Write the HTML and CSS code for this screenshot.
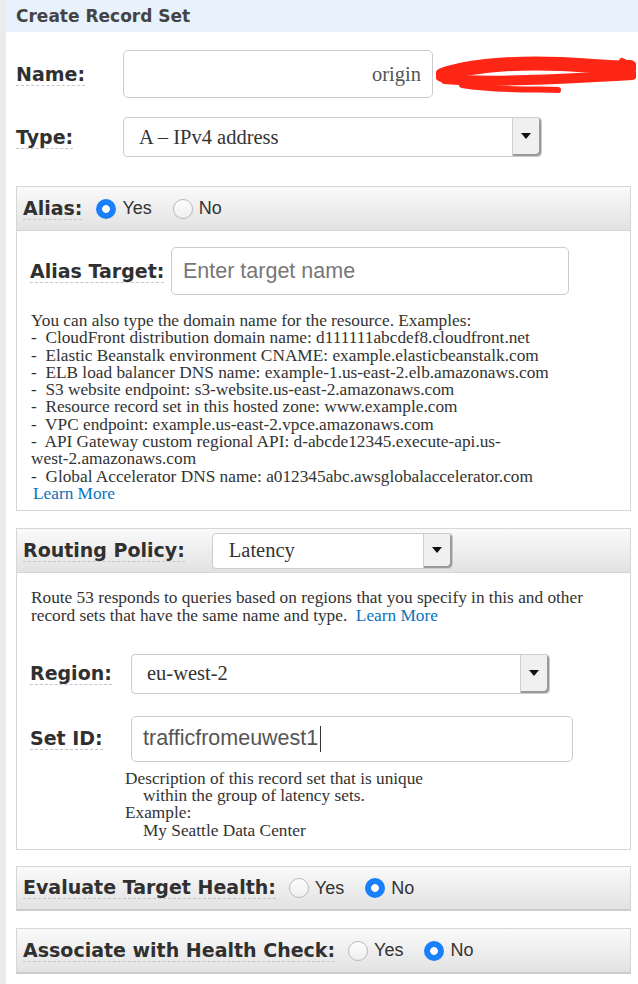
FILE: index.html
```html
<!DOCTYPE html>
<html>
<head>
<meta charset="utf-8">
<title>Create Record Set</title>
<link rel="stylesheet" href="styles.css">
</head>
<body>
<div class="page">
  <div class="title">Create Record Set</div>

  <div class="row row-name">
    <div class="top-lbl"><span class="lbl">Name:</span></div>
    <div class="input name-input">origin</div>
    <svg class="scribble" width="200" height="40" viewBox="0 0 200 40">
      <g fill="none" stroke="#ff2616" stroke-linecap="round" stroke-linejoin="round">
        <path d="M6,21 C34,11 84,8 124,10 C154,11 179,15 194,13" stroke-width="14"/>
        <path d="M9,25 C54,29 124,25 196,21" stroke-width="10"/>
        <path d="M26,31 C64,37 104,35 122,36" stroke-width="6"/>
        <path d="M54,11 L109,7" stroke-width="8"/>
        <path d="M186,7 L192,10" stroke-width="6"/>
      </g>
    </svg>
  </div>

  <div class="row row-type">
    <div class="top-lbl"><span class="lbl">Type:</span></div>
    <div class="select type-select">
      <span class="sel-text">A – IPv4 address</span>
      <span class="sel-btn"><i class="arrow"></i></span>
    </div>
  </div>

  <section class="panel alias-panel">
    <div class="panel-head">
      <span class="lbl">Alias:</span>
      <div class="radios">
        <span class="radio on"></span><span class="rlabel">Yes</span>
        <span class="radio"></span><span class="rlabel">No</span>
      </div>
    </div>
    <div class="panel-body alias-body">
      <div class="field">
        <div class="alias-lbl"><span class="lbl">Alias Target:</span></div>
        <div class="input target-input">Enter target name</div>
      </div>
      <p class="help alias-help">You can also type the domain name for the resource. Examples:<br>
-&nbsp; CloudFront distribution domain name: d111111abcdef8.cloudfront.net<br>
-&nbsp; Elastic Beanstalk environment CNAME: example.elasticbeanstalk.com<br>
-&nbsp; ELB load balancer DNS name: example-1.us-east-2.elb.amazonaws.com<br>
-&nbsp; S3 website endpoint: s3-website.us-east-2.amazonaws.com<br>
-&nbsp; Resource record set in this hosted zone: www.example.com<br>
-&nbsp; VPC endpoint: example.us-east-2.vpce.amazonaws.com<br>
-&nbsp; API Gateway custom regional API: d-abcde12345.execute-api.us-<br>west-2.amazonaws.com<br>
-&nbsp; Global Accelerator DNS name: a012345abc.awsglobalaccelerator.com<br>
<a class="link first-link" href="#">Learn More</a></p>
    </div>
  </section>

  <section class="panel routing-panel">
    <div class="panel-head">
      <span class="lbl">Routing Policy:</span>
      <div class="select policy-select">
        <span class="sel-text">Latency</span>
        <span class="sel-btn"><i class="arrow"></i></span>
      </div>
    </div>
    <div class="panel-body routing-body">
      <p class="help">Route 53 responds to queries based on regions that you specify in this and other<br>record sets that have the same name and type.&nbsp; <a class="link" href="#">Learn More</a></p>
      <div class="field region-field">
        <div class="rt-lbl"><span class="lbl">Region:</span></div>
        <div class="select region-select">
          <span class="sel-text">eu-west-2</span>
          <span class="sel-btn"><i class="arrow"></i></span>
        </div>
      </div>
      <div class="field setid-field">
        <div class="rt-lbl"><span class="lbl">Set ID:</span></div>
        <div class="input setid-input">trafficfromeuwest1<span class="caret"></span></div>
      </div>
      <div class="help setid-help">
        <div>Description of this record set that is unique</div>
        <div class="indent">within the group of latency sets.</div>
        <div>Example:</div>
        <div class="indent">My Seattle Data Center</div>
      </div>
    </div>
  </section>

  <section class="panel bar-panel eval-panel">
    <div class="bar-head">
      <span class="lbl">Evaluate Target Health:</span>
      <div class="radios">
        <span class="radio"></span><span class="rlabel">Yes</span>
        <span class="radio on"></span><span class="rlabel">No</span>
      </div>
    </div>
  </section>

  <section class="panel bar-panel assoc-panel">
    <div class="bar-head">
      <span class="lbl">Associate with Health Check:</span>
      <div class="radios">
        <span class="radio"></span><span class="rlabel">Yes</span>
        <span class="radio on"></span><span class="rlabel">No</span>
      </div>
    </div>
  </section>
</div>
</body>
</html>
```

FILE: styles.css
```css
* { box-sizing: border-box; }
html, body { margin: 0; padding: 0; background: #fff; }
body { font-family: "Liberation Serif", "Times New Roman", serif; color: #333; }

.page {
  border-left: 6px solid #ebebeb;
  min-height: 984px;
  padding-bottom: 9px;
}

.title {
  height: 32px;
  background: #e8f2fc;
  padding-left: 10px;
  display: flex;
  align-items: center;
  font: bold 17px "DejaVu Sans", Verdana, sans-serif;
  color: #444;
}

.lbl {
  font: bold 19px "DejaVu Sans", Verdana, sans-serif;
  color: #303030;
  line-height: 21px;
  border-bottom: 1px dashed #c6c6c6;
  white-space: nowrap;
}

.row { display: flex; align-items: center; margin-left: 10px; }
.top-lbl { width: 107px; flex: none; }
.row-name { margin-top: 18px; height: 48px; }
.row-type { margin-top: 19px; height: 40px; }

.input {
  border: 1px solid #ccc;
  border-radius: 5px;
  background: #fff;
  display: flex;
  align-items: center;
  flex: none;
}
.name-input {
  width: 310px;
  height: 48px;
  justify-content: flex-end;
  padding-right: 11px;
  font-size: 20.5px;
  color: #555;
}
.scribble { margin-left: 3px; flex: none; }

.select {
  display: flex;
  border: 1px solid #ccc;
  border-radius: 4px;
  background: #fff;
  font-size: 20.5px;
  color: #333;
  flex: none;
}
.sel-text { flex: 1; display: flex; align-items: center; padding-left: 15px; }
.sel-btn {
  width: 29px;
  background: #f0f0f0;
  border-left: 1px solid #cfcfcf;
  border-radius: 0 4px 4px 0;
  box-shadow: inset -2px -2px 0 #9a9a9a;
  display: flex;
  align-items: center;
  justify-content: center;
  padding: 0 2px 2px 0;
}
.arrow {
  display: block;
  width: 0;
  height: 0;
  border-left: 5px solid transparent;
  border-right: 5px solid transparent;
  border-top: 6px solid #111;
}
.type-select { width: 419px; height: 40px; }

.panel {
  margin-left: 10px;
  width: 615px;
  border: 1px solid #d6d6d6;
  background: #fff;
}
.alias-panel { margin-top: 29px; }
.routing-panel { margin-top: 17px; }

.panel-head {
  height: 44px;
  display: flex;
  align-items: center;
  padding-left: 6px;
  background: linear-gradient(#fafafa, #e2e2e2);
  border-bottom: 1px solid #d6d6d6;
}

.radios { display: flex; align-items: center; margin-left: 14px; }
.radio {
  width: 20px;
  height: 20px;
  border-radius: 50%;
  border: 1px solid #b9b9b9;
  background: linear-gradient(#fdfdfd, #efefef);
  flex: none;
}
.radio.on {
  border: none;
  background: radial-gradient(circle, #fff 0 3.5px, #1a7ffb 4.2px);
}
.rlabel {
  font: 18px "Liberation Sans", Arial, sans-serif;
  color: #333;
  margin-left: 6px;
  margin-right: 21px;
}

.panel-body { padding-left: 13px; }
.alias-body { padding-top: 16px; padding-bottom: 8px; }
.field { display: flex; align-items: center; }
.alias-lbl { width: 141px; flex: none; }
.target-input {
  width: 398px;
  height: 48px;
  padding-left: 11px;
  font: 21.5px "Liberation Sans", Arial, sans-serif;
  color: #777;
}

.help {
  margin: 0;
  font-size: 17.3px;
  line-height: 17.3px;
  color: #333;
}
.alias-help { margin-top: 17px; padding-left: 1px; }
.link { color: #0a73bb; text-decoration: none; }
.first-link { padding-left: 2px; }

.policy-select { width: 241px; height: 36px; margin-left: 27px; }
.policy-select .sel-text { padding-left: 16px; }

.routing-body { padding-top: 16px; padding-bottom: 10px; }
.routing-body > .help:first-child { padding-left: 1px; }
.region-field { margin-top: 30px; }
.rt-lbl { width: 101px; flex: none; }
.region-select { width: 419px; height: 40px; }
.setid-field { margin-top: 22px; }
.setid-input {
  width: 442px;
  height: 46px;
  padding-left: 11px;
  font: 21.5px "Liberation Sans", Arial, sans-serif;
  color: #555;
}
.caret {
  display: inline-block;
  width: 1px;
  height: 26px;
  background: #333;
  margin-left: 2px;
}
.setid-help { margin-top: 8px; padding-left: 95px; }
.indent { padding-left: 18px; }

.bar-panel { border-bottom: 2px solid #cbcbcb; }
.bar-head {
  display: flex;
  align-items: center;
  padding-left: 6px;
  background: linear-gradient(#fafafa, #e2e2e2);
}
.eval-panel { margin-top: 16px; }
.eval-panel .bar-head { height: 42px; }
.eval-panel .radios { margin-left: 13px; }
.assoc-panel { margin-top: 17px; }
.assoc-panel .bar-head { height: 43px; }
.assoc-panel .radios { margin-left: 13px; }
```
